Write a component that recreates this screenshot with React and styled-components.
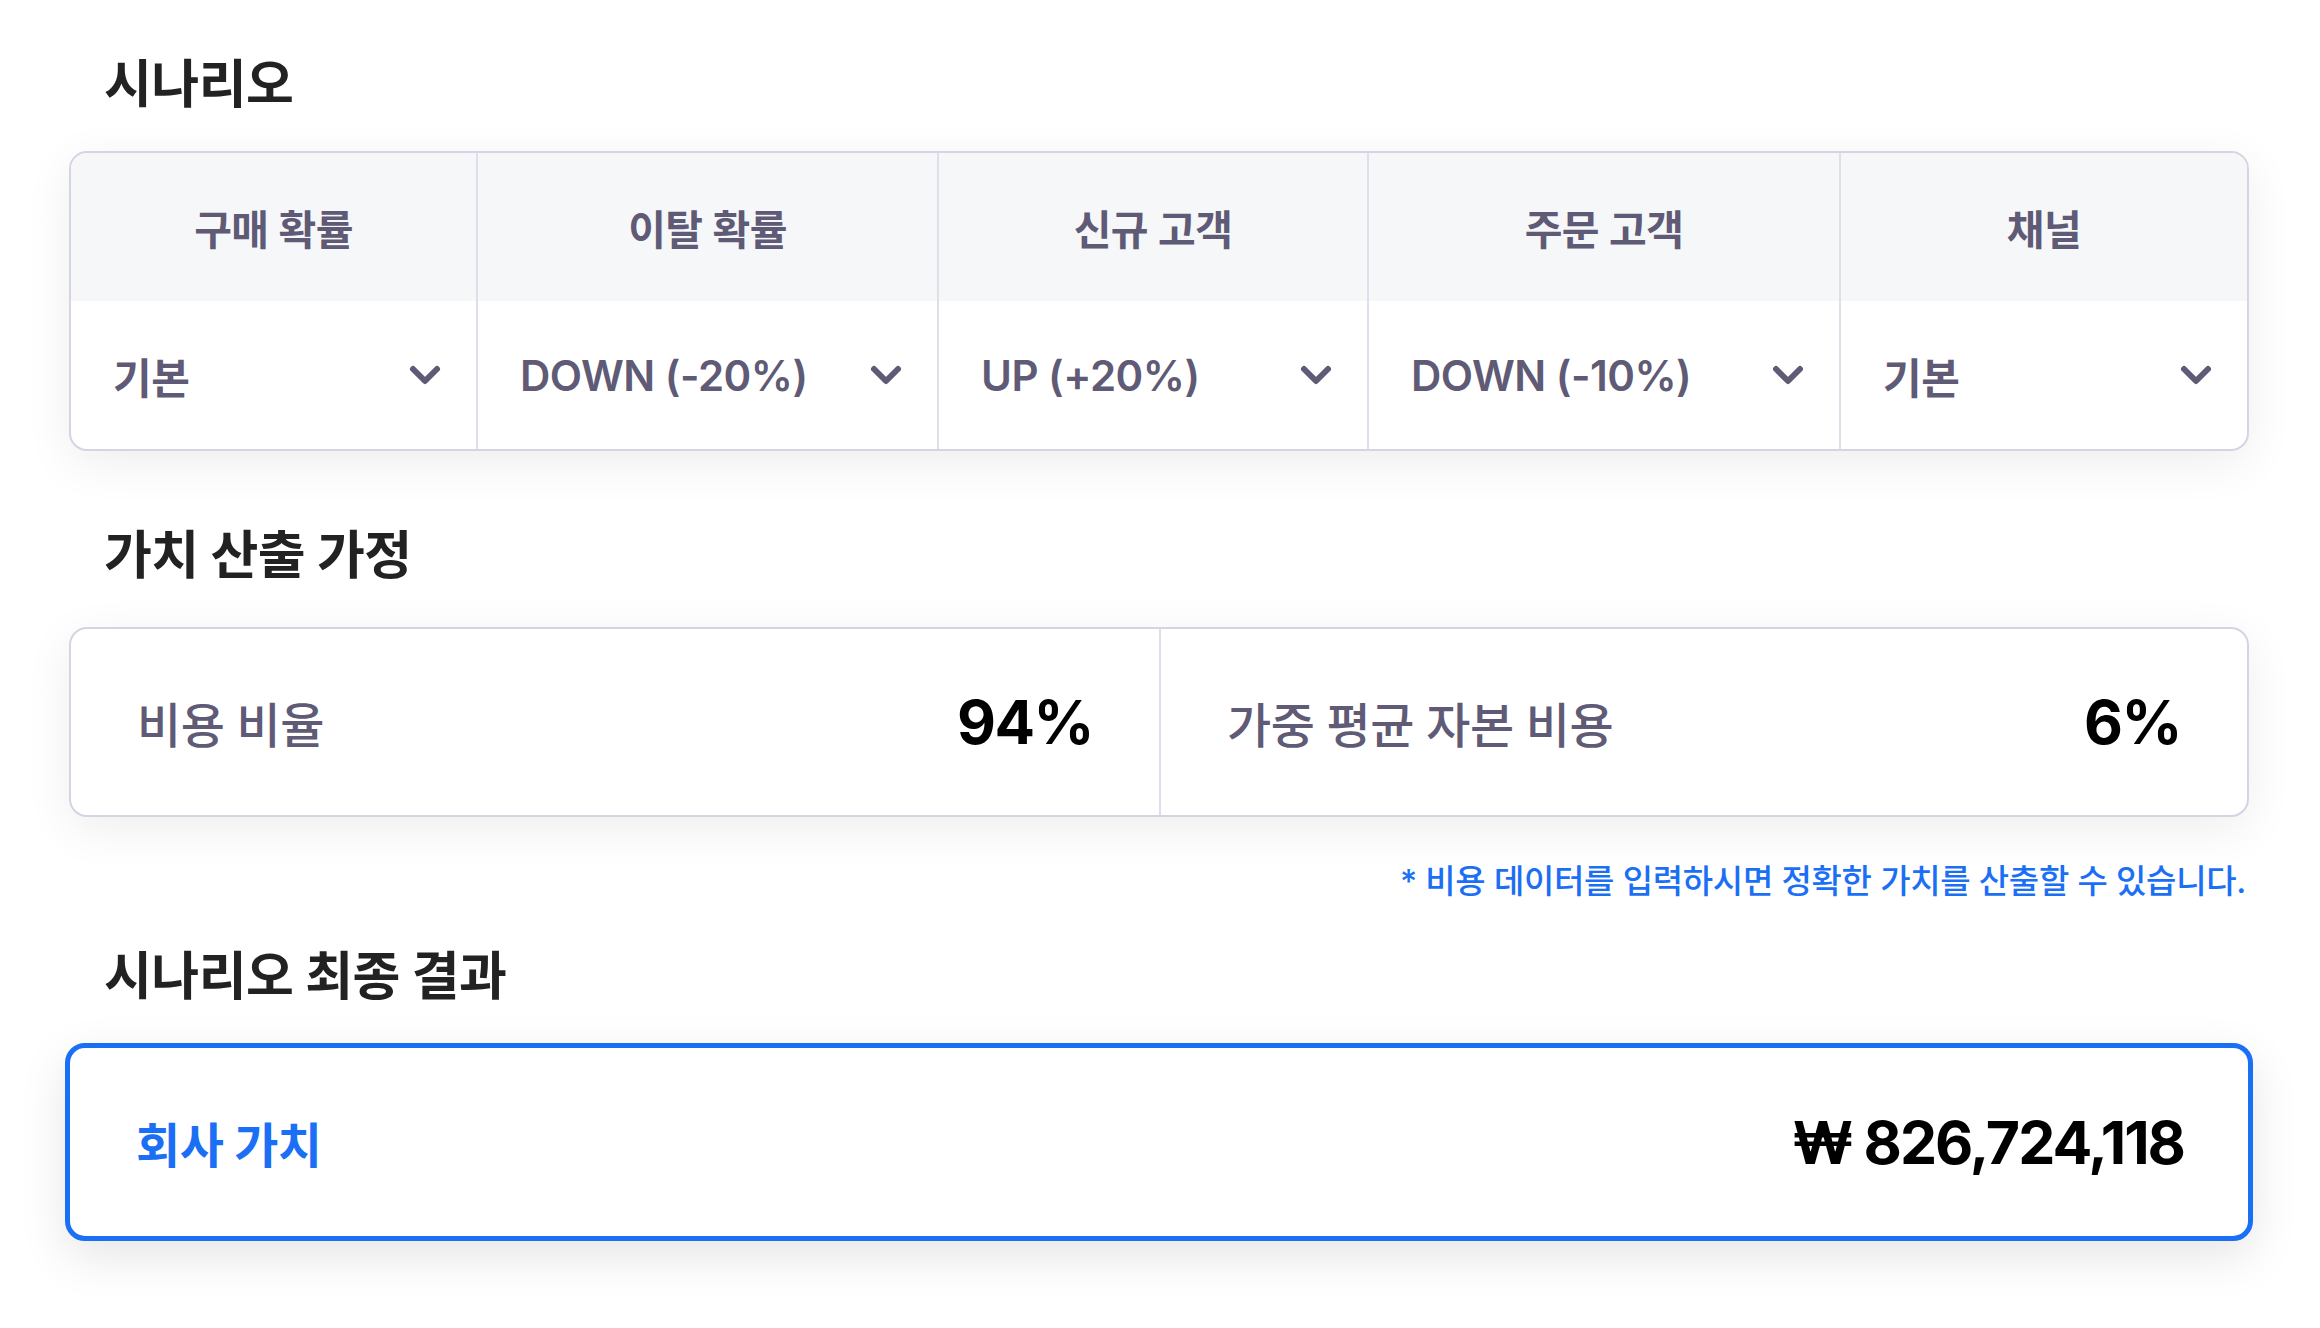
import React from "react";
import styled, { createGlobalStyle } from "styled-components";

const GlobalStyle = createGlobalStyle`
  body {
    margin: 0;
    background: #ffffff;
    font-family: Inter, "Noto Sans CJK KR", sans-serif;
  }
`;

const Page = styled.div`
  width: 2180px;
  padding: 55px 71px 80px 69px;
`;

const SectionTitle = styled.h2`
  margin: ${(p) => p.$top || 0}px 0 0 35px;
  font-size: 52px;
  line-height: 60px;
  font-weight: 700;
  color: #222222;
  letter-spacing: -0.5px;
`;

const Card = styled.div`
  margin-top: ${(p) => p.$top}px;
  background: #ffffff;
  border: 2px solid #d6d4e3;
  border-radius: 18px;
  box-shadow: 0 12px 48px rgba(0, 0, 0, 0.07);
  overflow: hidden;
`;

const ScenarioGrid = styled.div`
  display: grid;
  grid-template-columns: 405px 461px 430px 472px 408px;
  grid-template-rows: 148px 148px;
`;

const HeadCell = styled.div`
  display: flex;
  align-items: center;
  justify-content: center;
  background: #f6f7f9;
  border-left: ${(p) => (p.$first ? "none" : "2px solid #e0dfe9")};
  font-size: 41px;
  font-weight: 600;
  color: #5f5a75;
  letter-spacing: -0.5px;
`;

const SelectCell = styled.div`
  display: flex;
  align-items: center;
  justify-content: space-between;
  padding: 0 34px 0 42px;
  border-left: ${(p) => (p.$first ? "none" : "2px solid #e0dfe9")};
  cursor: pointer;
`;

const SelectValue = styled.span`
  font-size: 42px;
  font-weight: 600;
  color: #5f5a75;
  letter-spacing: -0.5px;
`;

const Chevron = styled.svg`
  width: 34px;
  height: 22px;
  flex: none;
`;

const AssumptionGrid = styled.div`
  display: grid;
  grid-template-columns: 1fr 1fr;
  height: 186px;
`;

const AssumptionCell = styled.div`
  display: flex;
  align-items: center;
  justify-content: space-between;
  padding: 0 66px 0 66px;
  border-left: ${(p) => (p.$first ? "none" : "2px solid #e0dfe9")};
`;

const AssumptionLabel = styled.span`
  font-size: 48px;
  font-weight: 500;
  color: #5f5a75;
  letter-spacing: -0.5px;
`;

const BigNumber = styled.span`
  font-size: 60px;
  font-weight: 700;
  color: #000000;
  letter-spacing: -1.5px;
`;

const Note = styled.p`
  margin: 44px 0 0;
  text-align: right;
  font-size: 33px;
  line-height: 40px;
  font-weight: 500;
  color: #1a6ff5;
  letter-spacing: -0.3px;
  padding-right: 3px;
`;

const ResultCard = styled.div`
  margin: 36px -4px 0;
  height: 188px;
  display: flex;
  align-items: center;
  justify-content: space-between;
  padding: 0 64px 0 66px;
  background: #ffffff;
  border: 5px solid #1a6ff5;
  border-radius: 20px;
  box-shadow: 0 16px 48px rgba(0, 0, 0, 0.1);
`;

const ResultLabel = styled.span`
  font-size: 48px;
  font-weight: 700;
  color: #1a6ff5;
  letter-spacing: -0.5px;
`;

const ResultValue = styled.span`
  font-size: 59px;
  font-weight: 700;
  color: #000000;
  letter-spacing: -2px;
`;

const ChevronDown = () => (
  <Chevron viewBox="0 0 34 22">
    <polyline
      points="5,5 17,17 29,5"
      fill="none"
      stroke="#5f5a75"
      strokeWidth="6"
      strokeLinecap="round"
      strokeLinejoin="round"
    />
  </Chevron>
);

const scenarios = [
  { label: "구매 확률", value: "기본" },
  { label: "이탈 확률", value: "DOWN (-20%)" },
  { label: "신규 고객", value: "UP (+20%)" },
  { label: "주문 고객", value: "DOWN (-10%)" },
  { label: "채널", value: "기본" },
];

export default function App() {
  return (
    <>
      <GlobalStyle />
      <Page>
        <SectionTitle>시나리오</SectionTitle>
        <Card $top={36}>
          <ScenarioGrid>
            {scenarios.map((s, i) => (
              <HeadCell key={s.label} $first={i === 0}>
                {s.label}
              </HeadCell>
            ))}
            {scenarios.map((s, i) => (
              <SelectCell key={s.label} $first={i === 0}>
                <SelectValue>{s.value}</SelectValue>
                <ChevronDown />
              </SelectCell>
            ))}
          </ScenarioGrid>
        </Card>

        <SectionTitle $top={75}>가치 산출 가정</SectionTitle>
        <Card $top={41}>
          <AssumptionGrid>
            <AssumptionCell $first>
              <AssumptionLabel>비용 비율</AssumptionLabel>
              <BigNumber>94%</BigNumber>
            </AssumptionCell>
            <AssumptionCell>
              <AssumptionLabel>가중 평균 자본 비용</AssumptionLabel>
              <BigNumber>6%</BigNumber>
            </AssumptionCell>
          </AssumptionGrid>
        </Card>
        <Note>* 비용 데이터를 입력하시면 정확한 가치를 산출할 수 있습니다.</Note>

        <SectionTitle $top={46}>시나리오 최종 결과</SectionTitle>
        <ResultCard>
          <ResultLabel>회사 가치</ResultLabel>
          <ResultValue>₩ 826,724,118</ResultValue>
        </ResultCard>
      </Page>
    </>
  );
}
